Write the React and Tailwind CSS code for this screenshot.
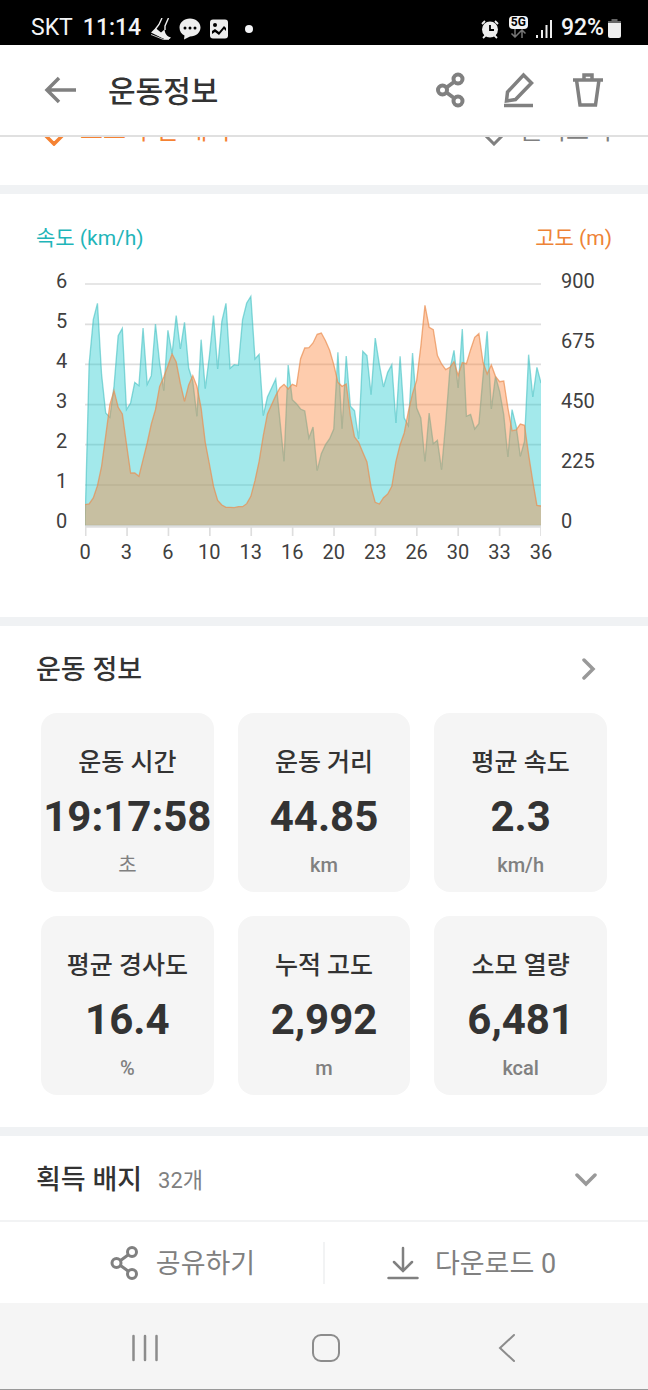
const SPEED = [797,313,180,131,345,460,473,380,228,206,450,430,368,378,205,374,348,193,310,393,212,283,168,268,188,325,365,470,240,387,290,168,328,185,131,326,315,317,180,130,110,298,284,468,412,385,358,480,605,316,420,432,448,454,535,502,633,582,555,537,508,278,507,289,440,453,538,275,288,405,235,315,382,338,315,490,290,475,498,280,445,475,605,460,552,542,630,490,330,272,385,208,470,464,508,492,350,215,448,350,395,465,592,450,500,590,545,285,412,323,370];
const ALTITUDE = [735,733,715,678,620,528,435,393,443,463,553,640,640,650,600,550,493,450,380,352,318,283,307,372,425,376,348,380,445,548,613,680,722,736,743,743,744,741,741,732,710,663,605,528,463,435,408,385,374,388,374,379,297,265,264,250,224,220,243,272,315,368,380,373,468,532,548,578,607,683,728,733,714,703,680,605,555,520,455,402,362,260,137,203,210,288,313,330,323,306,347,309,312,270,233,222,308,343,316,350,366,364,445,513,511,493,497,585,665,737,739];
const BASE = 797;
const STEP = 12.42;
const DISTANCES = [0, 3, 6, 10, 13, 16, 20, 23, 26, 30, 33, 36];

const toLine = (ys) => ys.map((y, i) => `${(i * STEP).toFixed(1)},${y}`).join(" ");
const toArea = (ys) => `0,${BASE} ${toLine(ys)} ${((ys.length - 1) * STEP).toFixed(1)},${BASE}`;

const STATS = [
  ["운동 시간", "19:17:58", "초"],
  ["운동 거리", "44.85", "km"],
  ["평균 속도", "2.3", "km/h"],
  ["평균 경사도", "16.4", "%"],
  ["누적 고도", "2,992", "m"],
  ["소모 열량", "6,481", "kcal"],
];

function ShareIcon({ thin }) {
  return (
    <svg width="30" height="36" viewBox="0 0 30 36" fill="none" stroke="currentColor" strokeWidth={thin ? 3 : 4} aria-hidden="true">
      <circle cx="6.5" cy="18" r="4.5" />
      <circle cx="22" cy="7" r="4.5" />
      <circle cx="22" cy="29" r="4.5" />
      <path d="M10.5 15.5 18 10M10.5 20.5 18 26" />
    </svg>
  );
}

function StatusBar() {
  return (
    <div className="flex h-[45px] items-center bg-black pt-3 pr-[27px] pl-[31px] text-[23px] text-gray-100">
      <span className="mr-2.5">SKT</span>
      <span className="mr-2.5 font-medium">11:14</span>
      <svg width="20" height="22" viewBox="0 0 20 22" className="mr-2" fill="none" stroke="#eee" aria-hidden="true">
        <path d="M11 0 8 6.500 4.500 11M17.500 0 14 8v4" strokeWidth="1.400" />
        <path d="M4.500 10 0 14.500 13 21h5.500l1.500-1.500c-4-1-6-3.500-6.500-8L10 14.500z" fill="#eee" stroke="none" />
        <path d="M1 16.500 13 21.500h6" stroke="#000" strokeWidth="0.800" />
        <path d="M0 16.500 12.500 21.500h5.500" strokeWidth="0.800" />
      </svg>
      <svg width="22" height="22" viewBox="0 0 22 22" className="mr-2" aria-hidden="true">
        <path d="M11 0.500c6 0 10.500 4 10.500 9S17 18.500 11 18.500L5 21.500l.5-4C2.500 16 .5 13.500.5 9.500.5 4.500 5 .5 11 .5z" fill="#eee" />
        <g fill="#000"><circle cx="6" cy="10" r="1.500" /><circle cx="11" cy="10" r="1.500" /><circle cx="16" cy="10" r="1.500" /></g>
      </svg>
      <svg width="20" height="20" viewBox="0 0 20 20" aria-hidden="true">
        <rect x="1" y="0.500" width="18" height="19" rx="3" fill="#eee" />
        <circle cx="6" cy="6" r="2" fill="#000" />
        <path d="M3 15v-3l3-2 4 3 5-6 2 2v3l-2-2-5 6-4-3z" fill="#000" />
      </svg>
      <span className="ml-4 size-2 rounded-full bg-gray-100" />
      <div className="ml-auto flex items-center">
        <svg width="18" height="20" viewBox="0 0 18 20" className="mr-2.5" aria-hidden="true">
          <circle cx="9" cy="10.500" r="8" fill="#eee" />
          <path d="M1 5 4 2M17 5l-3-3M2 19l2.500-2.500M16 19l-2.500-2.500" stroke="#eee" strokeWidth="1.800" />
          <path d="M9 6v5h4" fill="none" stroke="#000" strokeWidth="1.800" />
        </svg>
        <div className="mr-2 flex flex-col items-center pb-1">
          <span className="rounded-sm bg-gray-100 px-0.5 text-xs leading-[13px] font-bold text-black">5G</span>
          <svg width="16" height="9" viewBox="0 0 16 9" fill="none" stroke="#777" strokeWidth="1.500" aria-hidden="true">
            <path d="M5 0v8M1.500 4.500 5 8l3.500-3.500M12 9V1M8.500 4.500 12 1l3.500 3.500" />
          </svg>
        </div>
        <svg width="17" height="18" viewBox="0 0 17 18" className="mr-2" fill="#eee" aria-hidden="true">
          <path d="M0 15h2v3H0zM5 10h2v8H5zM9.500 5h2v13h-2zM14 0h2v18h-2z" />
        </svg>
        <span className="mr-1 font-medium">92%</span>
        <svg width="13" height="19" viewBox="0 0 13 19" aria-hidden="true">
          <path d="M3.500 0h6v2H13v4H0V2h3.500z" fill="#666" />
          <path d="M0 4h13v13a2 2 0 0 1-2 2H2a2 2 0 0 1-2-2z" fill="#eee" />
        </svg>
      </div>
    </div>
  );
}

function Header() {
  return (
    <header className="flex h-[92px] items-center border-b-2 border-[#e0e0e0] pr-11 pl-11 text-[#808080]">
      <button aria-label="뒤로" className="mr-[30px]">
        <svg width="34" height="28" viewBox="0 0 34 28" fill="none" stroke="currentColor" strokeWidth="3.500" aria-hidden="true">
          <path d="M32 14H3M15 2 3 14l12 12" />
        </svg>
      </button>
      <h1 className="flex-1 pt-0.5 text-[30px] font-medium text-[#333]">운동정보</h1>
      <div className="flex items-center gap-[37px]">
        <button aria-label="공유"><ShareIcon /></button>
        <button aria-label="편집">
          <svg width="32" height="36" viewBox="0 0 32 36" fill="none" stroke="currentColor" strokeWidth="3.500" aria-hidden="true">
            <path d="M3.500 29 4.500 20 20.500 3l8 8L12.500 27.500z" />
            <path d="M1 33.500h29" />
          </svg>
        </button>
        <button aria-label="삭제">
          <svg width="32" height="36" viewBox="0 0 32 36" fill="none" stroke="currentColor" strokeWidth="3.500" aria-hidden="true">
            <path d="M1 8h30M4.500 8 8 33h15.500L27 8M12 7V3h8v4" />
          </svg>
        </button>
      </div>
    </header>
  );
}

function ActionPeek() {
  return (
    <div className="flex h-12 items-end justify-between overflow-hidden pr-9 pb-[39px] pl-11 text-[25px] leading-[30px]">
      <a href="#course" className="flex items-end gap-4 text-[#f58233]">
        <svg width="20" height="24" viewBox="0 0 20 24" fill="none" stroke="currentColor" strokeWidth="3.500" aria-hidden="true">
          <path d="M2 10v4l8 8 8-8v-4a8 8 0 0 0-16 0z" />
        </svg>
        <span>코스 주변 배지</span>
      </a>
      <a href="#around" className="flex items-end gap-4 text-[#808080]">
        <svg width="20" height="24" viewBox="0 0 20 24" fill="none" stroke="currentColor" strokeWidth="3" aria-hidden="true">
          <path d="M1 13l9 9 9-9" />
        </svg>
        <span>둘러보기</span>
      </a>
    </div>
  );
}

function Chart() {
  return (
    <section className="px-9 pt-[29px] pb-[53px]">
      <div className="flex justify-between text-[21px] leading-[30px]">
        <span className="text-[#1fb5b9]">속도 (km/h)</span>
        <span className="text-[#ee8336]">고도 (m)</span>
      </div>
      <div className="mt-4 flex text-xl leading-6 text-[#404040]">
        <div className="flex w-[49px] shrink-0 flex-col gap-4 pl-5">
          {[6, 5, 4, 3, 2, 1, 0].map((n) => <span key={n}>{n}</span>)}
        </div>
        <div className="min-w-0 flex-1 pt-[13px]">
          <svg className="block h-[254px] w-full" viewBox="0 67 1366 762" preserveAspectRatio="none" role="img" aria-label="속도와 고도">
            <g stroke="#dedede" strokeWidth="5">
              {[73, 194, 314, 435, 555, 676].map((y) => <path key={y} d={`M0 ${y}H1366`} />)}
              <path d="M0 800H1366" strokeWidth="9" />
              {DISTANCES.map((d, i) => <path key={d} d={`M${2 + i * 124} 800v33`} />)}
            </g>
            <polygon points={toArea(SPEED)} fill="rgb(25 200 205)" fillOpacity="0.4" />
            <polyline points={toLine(SPEED)} fill="none" stroke="#45bfc2" strokeOpacity="0.6" strokeWidth="4" />
            <polygon points={toArea(ALTITUDE)} fill="rgb(253 128 50)" fillOpacity="0.4" />
            <polyline points={toLine(ALTITUDE)} fill="none" stroke="#e98d50" strokeOpacity="0.7" strokeWidth="4" />
          </svg>
          <div className="-mx-5 mt-1 flex justify-between">
            {DISTANCES.map((d) => <span key={d} className="w-10 text-center">{d}</span>)}
          </div>
        </div>
        <div className="flex w-[71px] shrink-0 flex-col gap-9 pl-5">
          {[900, 675, 450, 225, 0].map((n) => <span key={n}>{n}</span>)}
        </div>
      </div>
    </section>
  );
}

function Stats() {
  return (
    <section className="pt-6 pb-8">
      <div className="flex items-center justify-between pr-[52px] pl-9">
        <h2 className="pt-0.5 text-[27px] leading-9 font-medium text-[#333]">운동 정보</h2>
        <button aria-label="운동 정보 더보기">
          <svg width="14" height="24" viewBox="0 0 14 24" fill="none" stroke="#999" strokeWidth="3.500" strokeLinecap="round" aria-hidden="true">
            <path d="M2 3l9 9-9 9" />
          </svg>
        </button>
      </div>
      <div className="mt-[25px] grid grid-cols-3 gap-6 px-[41px]">
        {STATS.map(([label, value, unit]) => (
          <div key={label} className="flex h-[179px] flex-col items-center rounded-2xl bg-[#f5f5f5] pt-[30px] whitespace-nowrap">
            <span className="text-[25px] leading-10 font-medium text-[#333]">{label}</span>
            <span className="mt-1.5 text-[42px] leading-[56px] font-bold text-[#333]">{value}</span>
            <span className={unit === "초" ? "mt-1 text-xl leading-8 text-[#808080]" : "mt-1 text-xl leading-8 font-medium text-[#808080]"}>{unit}</span>
          </div>
        ))}
      </div>
    </section>
  );
}

export default function App() {
  return (
    <div className="bg-white font-['Roboto','Noto_Sans_CJK_KR',sans-serif]" lang="ko">
      <StatusBar />
      <Header />
      <main>
        <ActionPeek />
        <div className="h-[9px] bg-[#f0f2f4]" />
        <Chart />
        <div className="h-[9px] bg-[#f0f2f4]" />
        <Stats />
        <div className="h-[9px] bg-[#f0f2f4]" />
        <section className="flex h-[84px] items-center pt-1 pr-[50px] pl-9">
          <h2 className="text-[27px] font-medium text-[#333]">획득 배지</h2>
          <span className="ml-4 flex-1 text-[22px] text-[#808080]">32개</span>
          <button aria-label="펼치기">
            <svg width="24" height="14" viewBox="0 0 24 14" fill="none" stroke="#999" strokeWidth="3.500" strokeLinecap="round" aria-hidden="true">
              <path d="M3 2l9 9 9-9" />
            </svg>
          </button>
        </section>
      </main>
      <div className="flex h-[83px] items-center border-t-2 border-[#f2f3f4] text-[27px] text-[#808080]">
        <button className="flex w-1/2 items-center justify-center gap-4 pl-[42px]">
          <ShareIcon thin />
          <span className="pt-1">공유하기</span>
        </button>
        <span className="h-[42px] w-0.5 bg-[#f2f3f4]" />
        <button className="flex w-1/2 items-center justify-center gap-4 pr-[30px]">
          <svg width="32" height="34" viewBox="0 0 32 34" fill="none" stroke="currentColor" strokeWidth="2.500" strokeLinecap="round" aria-hidden="true">
            <path d="M16 2v23M7 16l9 9 9-9M1.500 32h29" />
          </svg>
          <span className="pt-1">다운로드 0</span>
        </button>
      </div>
      <nav className="grid h-[87px] grid-cols-3 items-center justify-items-center border-b border-[#999] bg-[#f5f5f5] pt-1 pr-[50px] pl-[54px] text-[#8c8c8c]">
        <button aria-label="최근 앱">
          <svg width="28" height="28" viewBox="0 0 28 28" stroke="currentColor" strokeWidth="2.500" strokeLinecap="round" aria-hidden="true">
            <path d="M2.500 2v24M14 2v24M25.500 2v24" />
          </svg>
        </button>
        <button aria-label="홈">
          <svg width="28" height="28" viewBox="0 0 28 28" fill="none" stroke="currentColor" strokeWidth="2" aria-hidden="true">
            <rect x="1" y="1" width="26" height="26" rx="8" />
          </svg>
        </button>
        <button aria-label="이전">
          <svg width="18" height="30" viewBox="0 0 18 30" fill="none" stroke="currentColor" strokeWidth="2" strokeLinecap="round" aria-hidden="true">
            <path d="M16 2 2 15l14 13" />
          </svg>
        </button>
      </nav>
    </div>
  );
}
